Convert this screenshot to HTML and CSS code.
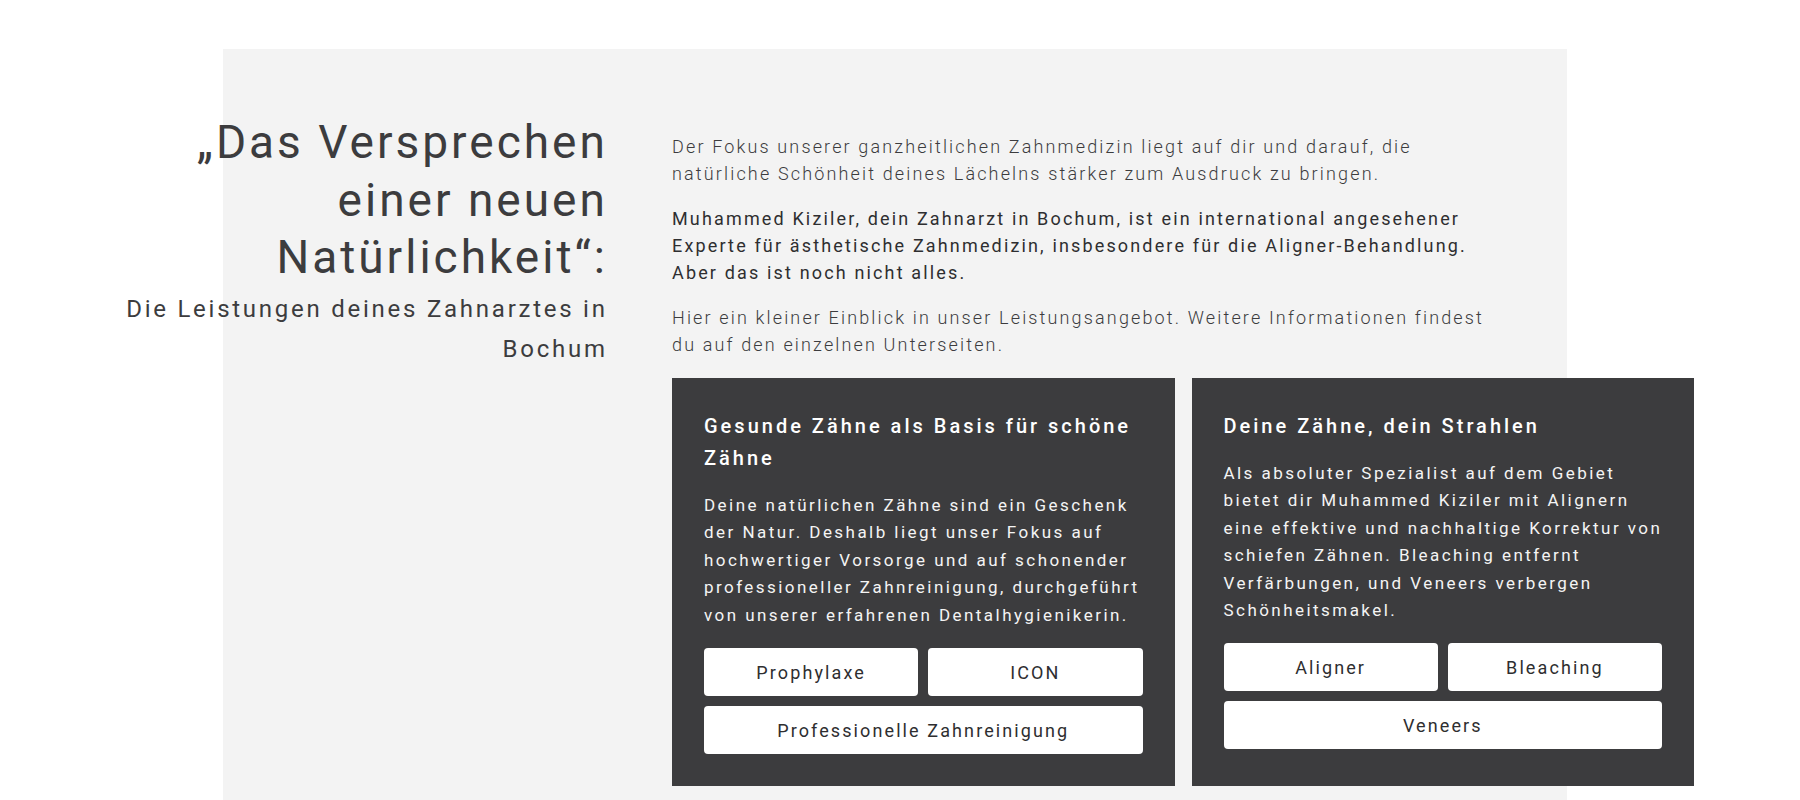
FILE: index.html
```html
<!DOCTYPE html>
<html lang="de">
<head>
<meta charset="utf-8">
<title>Leistungen</title>
<link rel="stylesheet" href="styles.css">
</head>
<body>
<section class="section">
  <div class="layout">
    <div class="lead">
      <h1 class="title">„Das Versprechen einer neuen Natürlichkeit“:</h1>
      <h2 class="subtitle">Die Leistungen deines Zahnarztes in Bochum</h2>
    </div>
    <div class="content">
      <div class="intro">
        <p class="light">Der Fokus unserer ganzheitlichen Zahnmedizin liegt auf dir und darauf, die natürliche Schönheit deines Lächelns stärker zum Ausdruck zu bringen.</p>
        <p class="strong">Muhammed Kiziler, dein Zahnarzt in Bochum, ist ein international angesehener Experte für ästhetische Zahnmedizin, insbesondere für die Aligner-Behandlung. Aber das ist noch nicht alles.</p>
        <p class="light">Hier ein kleiner Einblick in unser Leistungsangebot. Weitere Informationen findest du auf den einzelnen Unterseiten.</p>
      </div>
      <div class="cards">
        <div class="card">
          <h3 class="card-title">Gesunde Zähne als Basis für schöne Zähne</h3>
          <p class="card-text">Deine natürlichen Zähne sind ein Geschenk der Natur. Deshalb liegt unser Fokus auf hochwertiger Vorsorge und auf schonender professioneller Zahnreinigung, durchgeführt von unserer erfahrenen Dentalhygienikerin.</p>
          <div class="buttons">
            <a class="btn" href="#">Prophylaxe</a>
            <a class="btn" href="#">ICON</a>
            <a class="btn wide" href="#">Professionelle Zahnreinigung</a>
          </div>
        </div>
        <div class="card">
          <h3 class="card-title">Deine Zähne, dein Strahlen</h3>
          <p class="card-text">Als absoluter Spezialist auf dem Gebiet bietet dir Muhammed Kiziler mit Alignern eine effektive und nachhaltige Korrektur von schiefen Zähnen. Bleaching entfernt Verfärbungen, und Veneers verbergen Schönheitsmakel.</p>
          <div class="buttons">
            <a class="btn" href="#">Aligner</a>
            <a class="btn" href="#">Bleaching</a>
            <a class="btn wide" href="#">Veneers</a>
          </div>
        </div>
      </div>
    </div>
  </div>
</section>
</body>
</html>
```
FILE: styles.css
```css
html, body {
  margin: 0;
  padding: 0;
  background: #ffffff;
  overflow: hidden;
}
body {
  font-family: Roboto, "Liberation Sans", sans-serif;
  color: #3c3c3e;
  width: 1800px;
  height: 800px;
}
.section {
  position: relative;
  height: 800px;
  z-index: 0;
}
.section::before {
  content: "";
  position: absolute;
  left: 223px;
  top: 49px;
  width: 1344px;
  bottom: 0;
  background: #f3f3f3;
  z-index: -1;
}
.layout {
  display: flex;
  align-items: flex-start;
  gap: 67px;
  padding-left: 106px;
}
.lead {
  width: 499px;
  text-align: right;
  padding-top: 114px;
}
.title {
  margin: 0 -2.9px 0 0;
  font-weight: 400;
  font-size: 46px;
  line-height: 57.5px;
  letter-spacing: 3px;
  color: #3c3c3e;
}
.subtitle {
  margin: 2px -2.7px 0 0;
  font-weight: 400;
  font-size: 24px;
  line-height: 40.8px;
  letter-spacing: 2.75px;
  color: #3c3c3e;
}
.content {
  width: 1022px;
  padding-top: 133px;
}
.intro {
  width: 820px;
}
.intro p {
  margin: 0 0 18px;
  font-size: 18px;
  line-height: 27px;
  letter-spacing: 2.15px;
}
.intro p:last-child {
  margin-bottom: 0;
}
.light {
  font-weight: 300;
  color: #3c3c3e;
}
.strong {
  font-weight: 400;
  color: #2e2e30;
}
.cards {
  margin-top: 20px;
  display: grid;
  grid-template-columns: 1fr 1fr;
  gap: 17px;
}
.card {
  background: #3c3c3e;
  padding: 32px;
  color: #ffffff;
}
.card-title {
  margin: 0 -4px 18px 0;
  font-size: 20px;
  font-weight: 500;
  line-height: 32px;
  letter-spacing: 3px;
}
.card-text {
  margin: 0 -4px 19px 0;
  font-size: 17px;
  font-weight: 400;
  line-height: 27.4px;
  letter-spacing: 2.45px;
  color: #f4f4f4;
}
.buttons {
  display: grid;
  grid-template-columns: 1fr 1fr;
  gap: 10px;
}
.btn {
  display: flex;
  align-items: center;
  justify-content: center;
  height: 48px;
  background: #ffffff;
  border-radius: 4px;
  color: #2e2e30;
  text-decoration: none;
  font-size: 18px;
  letter-spacing: 2.1px;
}
.btn.wide {
  grid-column: 1 / span 2;
}
```
